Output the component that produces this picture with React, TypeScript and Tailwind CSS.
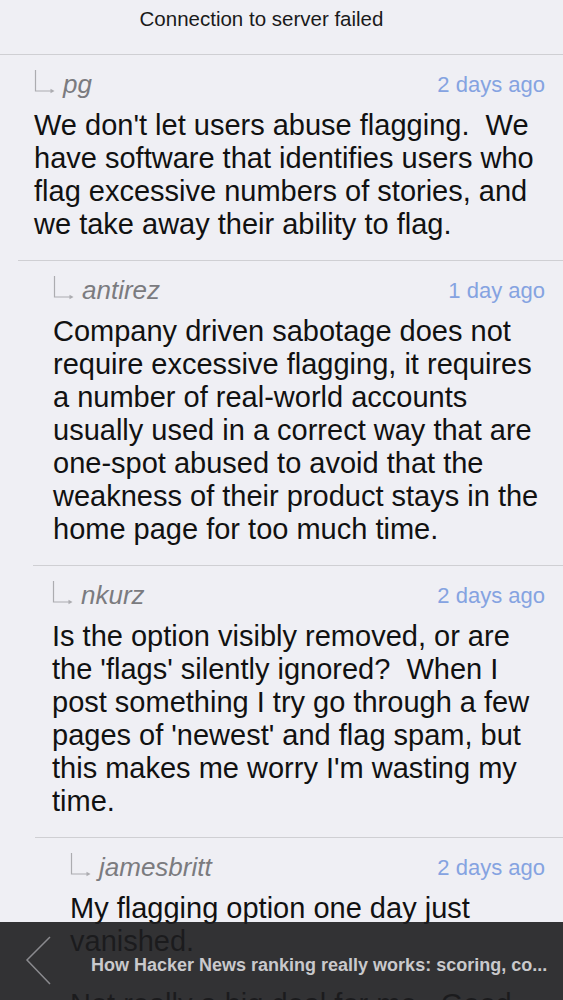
const comments = [
  {
    user: "pg",
    time: "2 days ago",
    sep: "ml-0",
    pad: "pl-[34px]",
    paras: [
      [
        "We don't let users abuse flagging.\u00a0 We",
        "have software that identifies users who",
        "flag excessive numbers of stories, and",
        "we take away their ability to flag.",
      ],
    ],
  },
  {
    user: "antirez",
    time: "1 day ago",
    sep: "ml-[18px]",
    pad: "pl-[53px]",
    paras: [
      [
        "Company driven sabotage does not",
        "require excessive flagging, it requires",
        "a number of real-world accounts",
        "usually used in a correct way that are",
        "one-spot abused to avoid that the",
        "weakness of their product stays in the",
        "home page for too much time.",
      ],
    ],
  },
  {
    user: "nkurz",
    time: "2 days ago",
    sep: "ml-[33px]",
    pad: "pl-[52px]",
    paras: [
      [
        "Is the option visibly removed, or are",
        "the 'flags' silently ignored?\u00a0 When I",
        "post something I try go through a few",
        "pages of 'newest' and flag spam, but",
        "this makes me worry I'm wasting my",
        "time.",
      ],
    ],
  },
  {
    user: "jamesbritt",
    time: "2 days ago",
    sep: "ml-[35px]",
    pad: "pl-[70px]",
    paras: [
      ["My flagging option one day just", "vanished."],
      ["Not really a big deal for me.\u00a0 Good"],
    ],
  },
];

const ReplyArrow = () => (
  <svg width="22" height="24" viewBox="0 0 22 24" className="shrink-0 -mt-[4px]">
    <path d="M1.5 0 V21 H17" fill="none" stroke="#acacb0" strokeWidth="1.2" />
    <path d="M16.5 18.8 L20.5 21 L16.5 23.2 Z" fill="#acacb0" />
  </svg>
);

export default function App() {
  return (
    <div
      className="relative h-[1000px] w-full overflow-hidden bg-[#efeff4] text-[#111]"
      style={{ fontFamily: '"Liberation Sans", Arial, sans-serif' }}
    >
      {/* status header */}
      <div className="flex h-[54px] items-start justify-center pt-[4px] pr-[40px] text-[20.5px] text-[#1a1a1a]">
        Connection to server failed
      </div>

      {comments.map((c) => (
        <div key={c.user}>
          <div className={`h-px bg-[#cfcfd3] ${c.sep}`} />
          <div className={`pt-[14px] pb-[19px] pr-[18px] ${c.pad}`}>
            <div className="flex h-[30px] items-center justify-between">
              <div className="flex items-center gap-[7px]">
                <ReplyArrow />
                <span className="text-[26px] italic text-[#7b7b7f]">{c.user}</span>
              </div>
              <span className="text-[22px] text-[#85a3e1]">{c.time}</span>
            </div>
            <div className="mt-[10px] flex flex-col gap-[30px]">
              {c.paras.map((p, i) => (
                <div key={i} className="text-[29px] leading-[33px]">
                  {p.map((line) => (
                    <div key={line} className="whitespace-nowrap">
                      {line}
                    </div>
                  ))}
                </div>
              ))}
            </div>
          </div>
        </div>
      ))}

      {/* bottom story bar */}
      <div className="absolute bottom-0 left-0 right-0 flex h-[78px] items-center bg-[rgba(29,29,31,0.9)]">
        <svg width="30" height="54" viewBox="0 0 30 54" className="ml-[24px] shrink-0">
          <path d="M26 3 L3 26 L26 50" fill="none" stroke="#8a8a8e" strokeWidth="1.5" />
        </svg>
        <div className="ml-[37px] mt-[8px] truncate pr-[8px] text-[18px] font-bold text-[#c9c9cc]">
          How Hacker News ranking really works: scoring, co...
        </div>
      </div>
    </div>
  );
}
